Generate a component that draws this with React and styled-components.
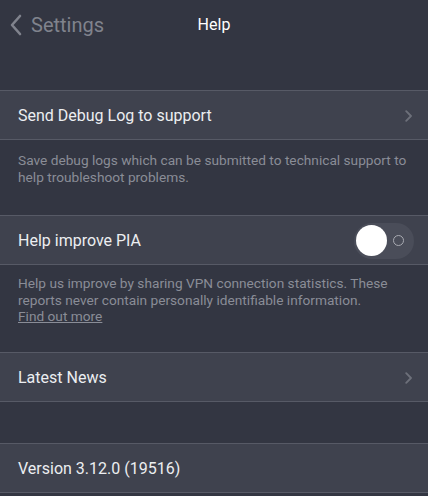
import React from "react";
import styled, { createGlobalStyle } from "styled-components";

const GlobalStyle = createGlobalStyle`
  body {
    margin: 0;
    background: #333642;
    font-family: Roboto, "Liberation Sans", sans-serif;
  }
`;

const Page = styled.div`
  width: 428px;
  height: 496px;
  background: #333642;
  overflow: hidden;
`;

const Header = styled.div`
  position: relative;
  height: 90px;
  display: flex;
  align-items: flex-start;
  padding-top: 11px;
  box-sizing: border-box;
`;

const BackButton = styled.div`
  display: flex;
  align-items: center;
  gap: 9px;
  padding-left: 10px;
  color: #80838d;
  font-size: 20px;
  height: 28px;
`;

const Title = styled.div`
  position: absolute;
  left: 0;
  right: 0;
  top: 11px;
  height: 28px;
  line-height: 28px;
  text-align: center;
  color: #ffffff;
  font-size: 16px;
  pointer-events: none;
`;

const Row = styled.div`
  height: 50px;
  box-sizing: border-box;
  display: flex;
  align-items: center;
  justify-content: space-between;
  padding: 1px 16px 0 18px;
  background: #3f424e;
  border-top: 1px solid #575a66;
  border-bottom: 1px solid #575a66;
  color: #eceef1;
  font-size: 16px;
`;

const Description = styled.div`
  height: ${(p) => p.h}px;
  box-sizing: border-box;
  padding: ${(p) => p.top}px 18px 0;
  color: #8a8d97;
  font-size: 13.7px;
  line-height: 16.7px;
`;

const Spacer = styled.div`
  height: ${(p) => p.h}px;
`;

const Link = styled.span`
  text-decoration: underline;
`;

const Toggle = styled.div`
  width: 60px;
  height: 36px;
  border-radius: 18px;
  background: #4a4d59;
  display: flex;
  align-items: center;
  justify-content: space-between;
  padding: 0 10px 0 2px;
  box-sizing: border-box;
  margin-right: -2px;
`;

const Knob = styled.div`
  width: 31px;
  height: 31px;
  border-radius: 50%;
  background: #ffffff;
`;

const OffMark = styled.div`
  width: 9px;
  height: 9px;
  border-radius: 50%;
  border: 1.5px solid #a9abb2;
`;

const Chevron = ({ color = "#6d707a", size = 12, stroke = 2 }) => (
  <svg width={size * 0.6} height={size} viewBox="0 0 6 10" fill="none">
    <path d="M1 1l4 4-4 4" stroke={color} strokeWidth={stroke / 1.3} strokeLinecap="round" strokeLinejoin="round" />
  </svg>
);

const BackChevron = () => (
  <svg width="12" height="22" viewBox="0 0 12 22" fill="none">
    <path d="M10 2L2 11l8 9" stroke="#80838d" strokeWidth="2.6" strokeLinecap="round" strokeLinejoin="round" />
  </svg>
);

export default function App() {
  return (
    <Page>
      <GlobalStyle />
      <Header>
        <BackButton>
          <BackChevron />
          <span>Settings</span>
        </BackButton>
        <Title>Help</Title>
      </Header>
      <Row>
        <span>Send Debug Log to support</span>
        <Chevron />
      </Row>
      <Description h={75} top={12}>
        Save debug logs which can be submitted to technical support to help troubleshoot problems.
      </Description>
      <Row>
        <span>Help improve PIA</span>
        <Toggle>
          <Knob />
          <OffMark />
        </Toggle>
      </Row>
      <Description h={87} top={10}>
        Help us improve by sharing VPN connection statistics. These reports never contain personally identifiable information.
        <br />
        <Link>Find out more</Link>
      </Description>
      <Row>
        <span>Latest News</span>
        <Chevron />
      </Row>
      <Spacer h={41} />
      <Row>
        <span>Version 3.12.0 (19516)</span>
      </Row>
    </Page>
  );
}
